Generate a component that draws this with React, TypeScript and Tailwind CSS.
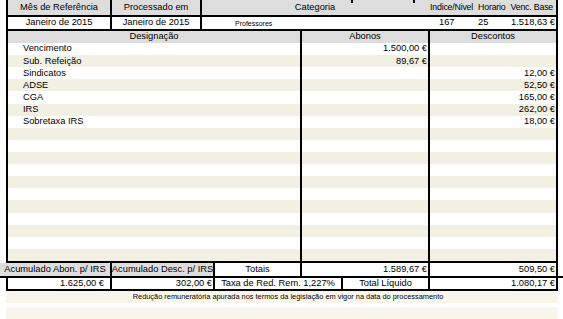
const gray = 'bg-[#dddddd]'

const lines: Array<{ label: string; abono?: string; desconto?: string }> = [
  { label: 'Vencimento', abono: '1.500,00 €' },
  { label: 'Sub. Refeição', abono: '89,67 €' },
  { label: 'Sindicatos', desconto: '12,00 €' },
  { label: 'ADSE', desconto: '52,50 €' },
  { label: 'CGA', desconto: '165,00 €' },
  { label: 'IRS', desconto: '262,00 €' },
  { label: 'Sobretaxa IRS', desconto: '18,00 €' },
]

// 18 rows in the body, blank ones fill the rest
const rows = Array.from({ length: 18 }, (_, i) => lines[i] ?? { label: '' })

export default function App() {
  return (
    <div className="relative h-[319px] w-[563px] overflow-hidden bg-white font-['Liberation_Sans',Arial,sans-serif] text-[9.3px] leading-none text-black">
      {/* tail ends of the borders from the block above */}
      <span className="absolute left-[351px] top-0 h-[3px] w-[2px] bg-black" />
      <span className="absolute left-[413px] top-0 h-[3px] w-[2px] bg-black" />

      <div className="ml-[6px] w-[552px] border-x-2 border-black">
        {/* header */}
        <div className={`flex h-[17px] border-b-2 border-black ${gray}`}>
          <div className="flex w-[102px] items-center justify-center">Mês de Referência</div>
          <div className="flex w-[90px] items-center justify-center border-l-2 border-black">Processado em</div>
          <div className="flex flex-1 border-l-2 border-black">
            <div className="flex w-[226px] items-center justify-center">Categoria</div>
            <div className="flex flex-1 items-center gap-[5px] pl-[2px] text-[8.8px] tracking-[-0.2px]">
              <span>Indice/Nivel</span>
              <span>Horario</span>
              <span>Venc. Base</span>
            </div>
          </div>
        </div>
        <div className="flex h-[14px] border-b-2 border-black">
          <div className="flex w-[102px] items-center justify-center">Janeiro de 2015</div>
          <div className="flex w-[90px] items-center justify-center border-l-2 border-black">Janeiro de 2015</div>
          <div className="flex flex-1 items-center border-l-2 border-black">
            <span className="w-[226px] pl-[33px] text-[7px]">Professores</span>
            <span className="w-[50px] pl-[11px]">167</span>
            <span className="w-[20px]">25</span>
            <span className="flex-1 pr-[1px] text-right">1.518,63 €</span>
          </div>
        </div>
        <div className={`flex h-[12px] ${gray}`}>
          <div className="flex w-[292px] items-center justify-center">Designação</div>
          <div className="flex w-[128px] items-center justify-center border-l-2 border-black">Abonos</div>
          <div className="flex flex-1 items-center justify-center border-l-2 border-black">Descontos</div>
        </div>

        {/* body */}
        <div className="flex h-[220px] flex-col border-b-2 border-black">
          {rows.map((r, i) => (
            <div key={i} className={`flex flex-1 ${i % 2 ? 'bg-[#f2f0e3]' : 'bg-white'}`}>
              <div className="flex w-[292px] items-center pl-[15px]">{r.label}</div>
              <div className="flex w-[128px] items-center justify-end border-l-2 border-black pr-[1px]">{r.abono}</div>
              <div className="flex flex-1 items-center justify-end border-l-2 border-black pr-[1px]">{r.desconto}</div>
            </div>
          ))}
        </div>
      </div>

      {/* totals */}
      <div className="flex h-[15px] border-b-2 border-black">
        <div className={`flex w-[110px] items-center justify-center whitespace-nowrap ${gray}`}>Acumulado Abon. p/ IRS</div>
        <div className={`flex w-[103px] items-center justify-center whitespace-nowrap border-l-2 border-black ${gray}`}>
          Acumulado Desc. p/ IRS
        </div>
        <div className="flex w-[87px] items-center justify-center border-l-2 border-black">Totais</div>
        <div className="flex w-[128px] items-center justify-end border-l-2 border-black pr-[1px]">1.589,67 €</div>
        <div className="flex w-[130px] items-center justify-end border-x-2 border-black pr-[1px]">509,50 €</div>
      </div>
      <div className="ml-[6px] flex h-[13px] w-[552px] border-x-2 border-b-2 border-black">
        <div className="flex w-[102px] items-center justify-end pr-[6px]">1.625,00 €</div>
        <div className="flex w-[103px] items-center justify-end border-l-2 border-black pr-[1px]">302,00 €</div>
        <div className="flex w-[128px] items-center justify-center border-l-2 border-black">Taxa de Red. Rem. 1,227%</div>
        <div className="flex w-[87px] items-center justify-center border-l-2 border-black">Total Líquido</div>
        <div className="flex flex-1 items-center justify-end border-l-2 border-black pr-[1px]">1.080,17 €</div>
      </div>

      <div className="ml-[6px] flex h-[12px] w-[552px] items-center justify-center bg-[#f8f6ea] pl-[12px] text-[7.4px]">
        Redução remuneratória apurada nos termos da legislação em vigor na data do processamento
      </div>
      <div className="ml-[6px] mt-[4px] h-[14px] w-[552px] bg-[#f8f6ea]" />
    </div>
  )
}
